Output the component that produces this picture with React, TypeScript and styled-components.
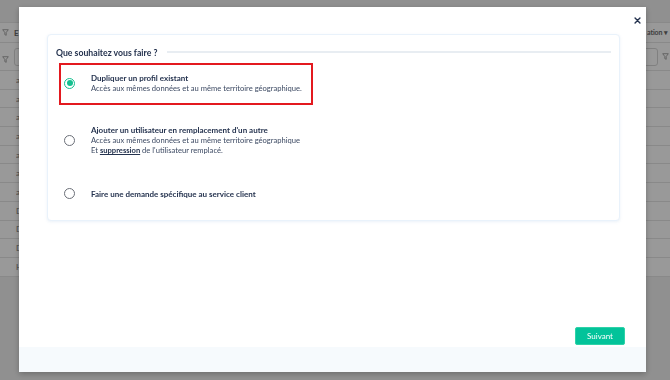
import React from "react";
import styled, { createGlobalStyle } from "styled-components";

const GlobalStyle = createGlobalStyle`
  html, body { margin: 0; padding: 0; }
  body {
    width: 670px;
    height: 380px;
    overflow: hidden;
    background: #efefef;
    font-family: Lato, "Noto Sans", sans-serif;
  }
  * { box-sizing: border-box; }
`;

/* ---------- background page (behind overlay) ---------- */
const Page = styled.div`
  width: 670px;
  height: 380px;
  padding-top: 22px;
  background: #f0f0f0;
`;

const Table = styled.div`
  background: #ffffff;
  display: flex;
  flex-direction: column;
`;

const HeadRow = styled.div`
  height: 21px;
  display: flex;
  align-items: center;
  border-top: 1px solid #e4e4e4;
  border-bottom: 1px solid #e4e4e4;
  font-size: 8px;
  font-weight: 700;
  color: #6a6a6a;
`;

const FilterRow = styled.div`
  height: 28px;
  display: flex;
  align-items: center;
  border-bottom: 1px solid #e4e4e4;
`;

const BodyRow = styled.div`
  height: 18.7px;
  display: flex;
  align-items: center;
  border-bottom: 1px solid #e4e4e4;
  font-size: 8px;
  color: #777;
`;

const Cell = styled.div<{ $w: number }>`
  width: ${(p) => p.$w}px;
  flex: none;
  display: flex;
  align-items: center;
  gap: 4px;
  white-space: nowrap;
  overflow: hidden;
`;

const HeadLabel = styled.span`
  font-size: 7px;
  letter-spacing: -0.1px;
`;

const FilterInput = styled.div<{ $w: number }>`
  width: ${(p) => p.$w}px;
  height: 18px;
  border: 1px solid #d6d6d6;
  border-radius: 3px;
  background: #fff;
  flex: none;
`;

const Funnel = () => (
  <svg width="7" height="7" viewBox="0 0 10 10">
    <path d="M1 1h8L6 5v4L4 8V5z" fill="none" stroke="#999" strokeWidth="1.2" />
  </svg>
);

/* ---------- overlay + modal ---------- */
const Overlay = styled.div`
  position: fixed;
  inset: 0;
  background: rgba(0, 0, 0, 0.4);
`;

const Modal = styled.div`
  position: fixed;
  left: 19px;
  top: 7px;
  width: 627px;
  height: 365px;
  background: #ffffff;
  box-shadow: 0 2px 6px rgba(0, 0, 0, 0.25);
  display: flex;
  flex-direction: column;
`;

const CloseButton = styled.button`
  position: absolute;
  right: 4px;
  top: 8px;
  width: 10px;
  height: 10px;
  padding: 0;
  border: 0;
  background: transparent;
  display: flex;
  align-items: center;
  justify-content: center;
  cursor: pointer;
`;

const ModalBody = styled.div`
  flex: 1;
  display: flex;
  flex-direction: column;
  padding: 27px 21px 2px 28px;
`;

const Card = styled.div`
  margin-right: 5px;
  background: #fff;
  border: 1px solid #e9f2fb;
  border-radius: 4px;
  box-shadow: 0 1px 3px rgba(120, 160, 210, 0.15);
  padding: 11px 8px 9px 8px;
  display: flex;
  flex-direction: column;
`;

const Legend = styled.div`
  display: flex;
  align-items: center;
  height: 12px;
  margin-bottom: 5px;
`;

const LegendText = styled.span`
  font-size: 8.7px;
  font-weight: 700;
  color: #25334f;
  white-space: nowrap;
`;

const LegendLine = styled.div`
  flex: 1;
  height: 2px;
  margin-left: 10px;
  background: #e8edf2;
`;

const Options = styled.div`
  display: flex;
  flex-direction: column;
  gap: 10px;
  padding-left: 3px;
`;

const Option = styled.label<{ $selected: boolean }>`
  display: flex;
  align-items: center;
  align-self: flex-start;
  width: 254px;
  padding: 8px 8px 10px 3px;
  border: 2px solid ${(p) => (p.$selected ? "#e3191f" : "transparent")};
  cursor: pointer;
  &:last-child {
    margin-top: 1px;
  }
`;

const Radio = styled.span<{ $checked: boolean }>`
  width: 11px;
  height: 11px;
  flex: none;
  border-radius: 50%;
  border: 1.4px solid ${(p) => (p.$checked ? "#13c08f" : "#6b6f78")};
  display: flex;
  align-items: center;
  justify-content: center;
  margin-right: 16px;
  &::after {
    content: "";
    width: 6px;
    height: 6px;
    border-radius: 50%;
    background: #13c08f;
    display: ${(p) => (p.$checked ? "block" : "none")};
  }
`;

const OptionText = styled.div`
  display: flex;
  flex-direction: column;
  white-space: nowrap;
`;

const OptionTitle = styled.span`
  font-size: 8px;
  line-height: 10px;
  font-weight: 700;
  color: #25334f;
`;

const OptionDesc = styled.span`
  font-size: 7.6px;
  line-height: 10px;
  color: #3d4a63;
`;

const Strong = styled.a`
  font-weight: 700;
  color: #25334f;
  text-decoration: underline;
`;

const Spacer = styled.div`
  flex: 1;
`;

const Actions = styled.div`
  display: flex;
  justify-content: flex-end;
`;

const PrimaryButton = styled.button`
  width: 50px;
  height: 18px;
  border: 1px solid #2ed2a8;
  border-radius: 2px;
  background: #03c39a;
  color: #ffffff;
  font-family: Lato, "Noto Sans", sans-serif;
  font-size: 8px;
  padding: 0;
  cursor: pointer;
`;

const Footer = styled.div`
  height: 25px;
  background: #f6fafd;
`;

const rows = ["at", "at", "at", "at", "at", "at", "at", "D", "D", "D", "H"];

export default function App() {
  return (
    <>
      <GlobalStyle />
      <Page>
        <Table>
          <HeadRow>
            <Cell $w={14}><span style={{ paddingLeft: 2 }}><Funnel /></span></Cell>
            <Cell $w={633}>E</Cell>
            <Cell $w={23}><HeadLabel>ation ▾</HeadLabel></Cell>
          </HeadRow>
          <FilterRow>
            <Cell $w={14}><span style={{ paddingLeft: 2 }}><Funnel /></span></Cell>
            <Cell $w={626}><FilterInput $w={60} /></Cell>
            <Cell $w={30}><FilterInput $w={18} /><Funnel /></Cell>
          </FilterRow>
          {rows.map((r, i) => (
            <BodyRow key={i}>
              <Cell $w={16} />
              <Cell $w={654}>{r}</Cell>
            </BodyRow>
          ))}
        </Table>
      </Page>
      <Overlay />
      <Modal>
        <CloseButton aria-label="Fermer">
          <svg width="7" height="7" viewBox="0 0 10 10">
            <path d="M1.5 1.5l7 7M8.5 1.5l-7 7" stroke="#25334f" strokeWidth="2" strokeLinecap="round" />
          </svg>
        </CloseButton>
        <ModalBody>
          <Card>
            <Legend>
              <LegendText>Que souhaitez vous faire ?</LegendText>
              <LegendLine />
            </Legend>
            <Options>
              <Option $selected>
                <Radio $checked />
                <OptionText>
                  <OptionTitle>Dupliquer un profil existant</OptionTitle>
                  <OptionDesc>Accès aux mêmes données et au même territoire géographique.</OptionDesc>
                </OptionText>
              </Option>
              <Option $selected={false}>
                <Radio $checked={false} />
                <OptionText>
                  <OptionTitle>Ajouter un utilisateur en remplacement d'un autre</OptionTitle>
                  <OptionDesc>Accès aux mêmes données et au même territoire géographique</OptionDesc>
                  <OptionDesc>
                    Et <Strong>suppression</Strong> de l'utilisateur remplacé.
                  </OptionDesc>
                </OptionText>
              </Option>
              <Option $selected={false}>
                <Radio $checked={false} />
                <OptionText>
                  <OptionTitle>Faire une demande spécifique au service client</OptionTitle>
                </OptionText>
              </Option>
            </Options>
          </Card>
          <Spacer />
          <Actions>
            <PrimaryButton>Suivant</PrimaryButton>
          </Actions>
        </ModalBody>
        <Footer />
      </Modal>
    </>
  );
}
